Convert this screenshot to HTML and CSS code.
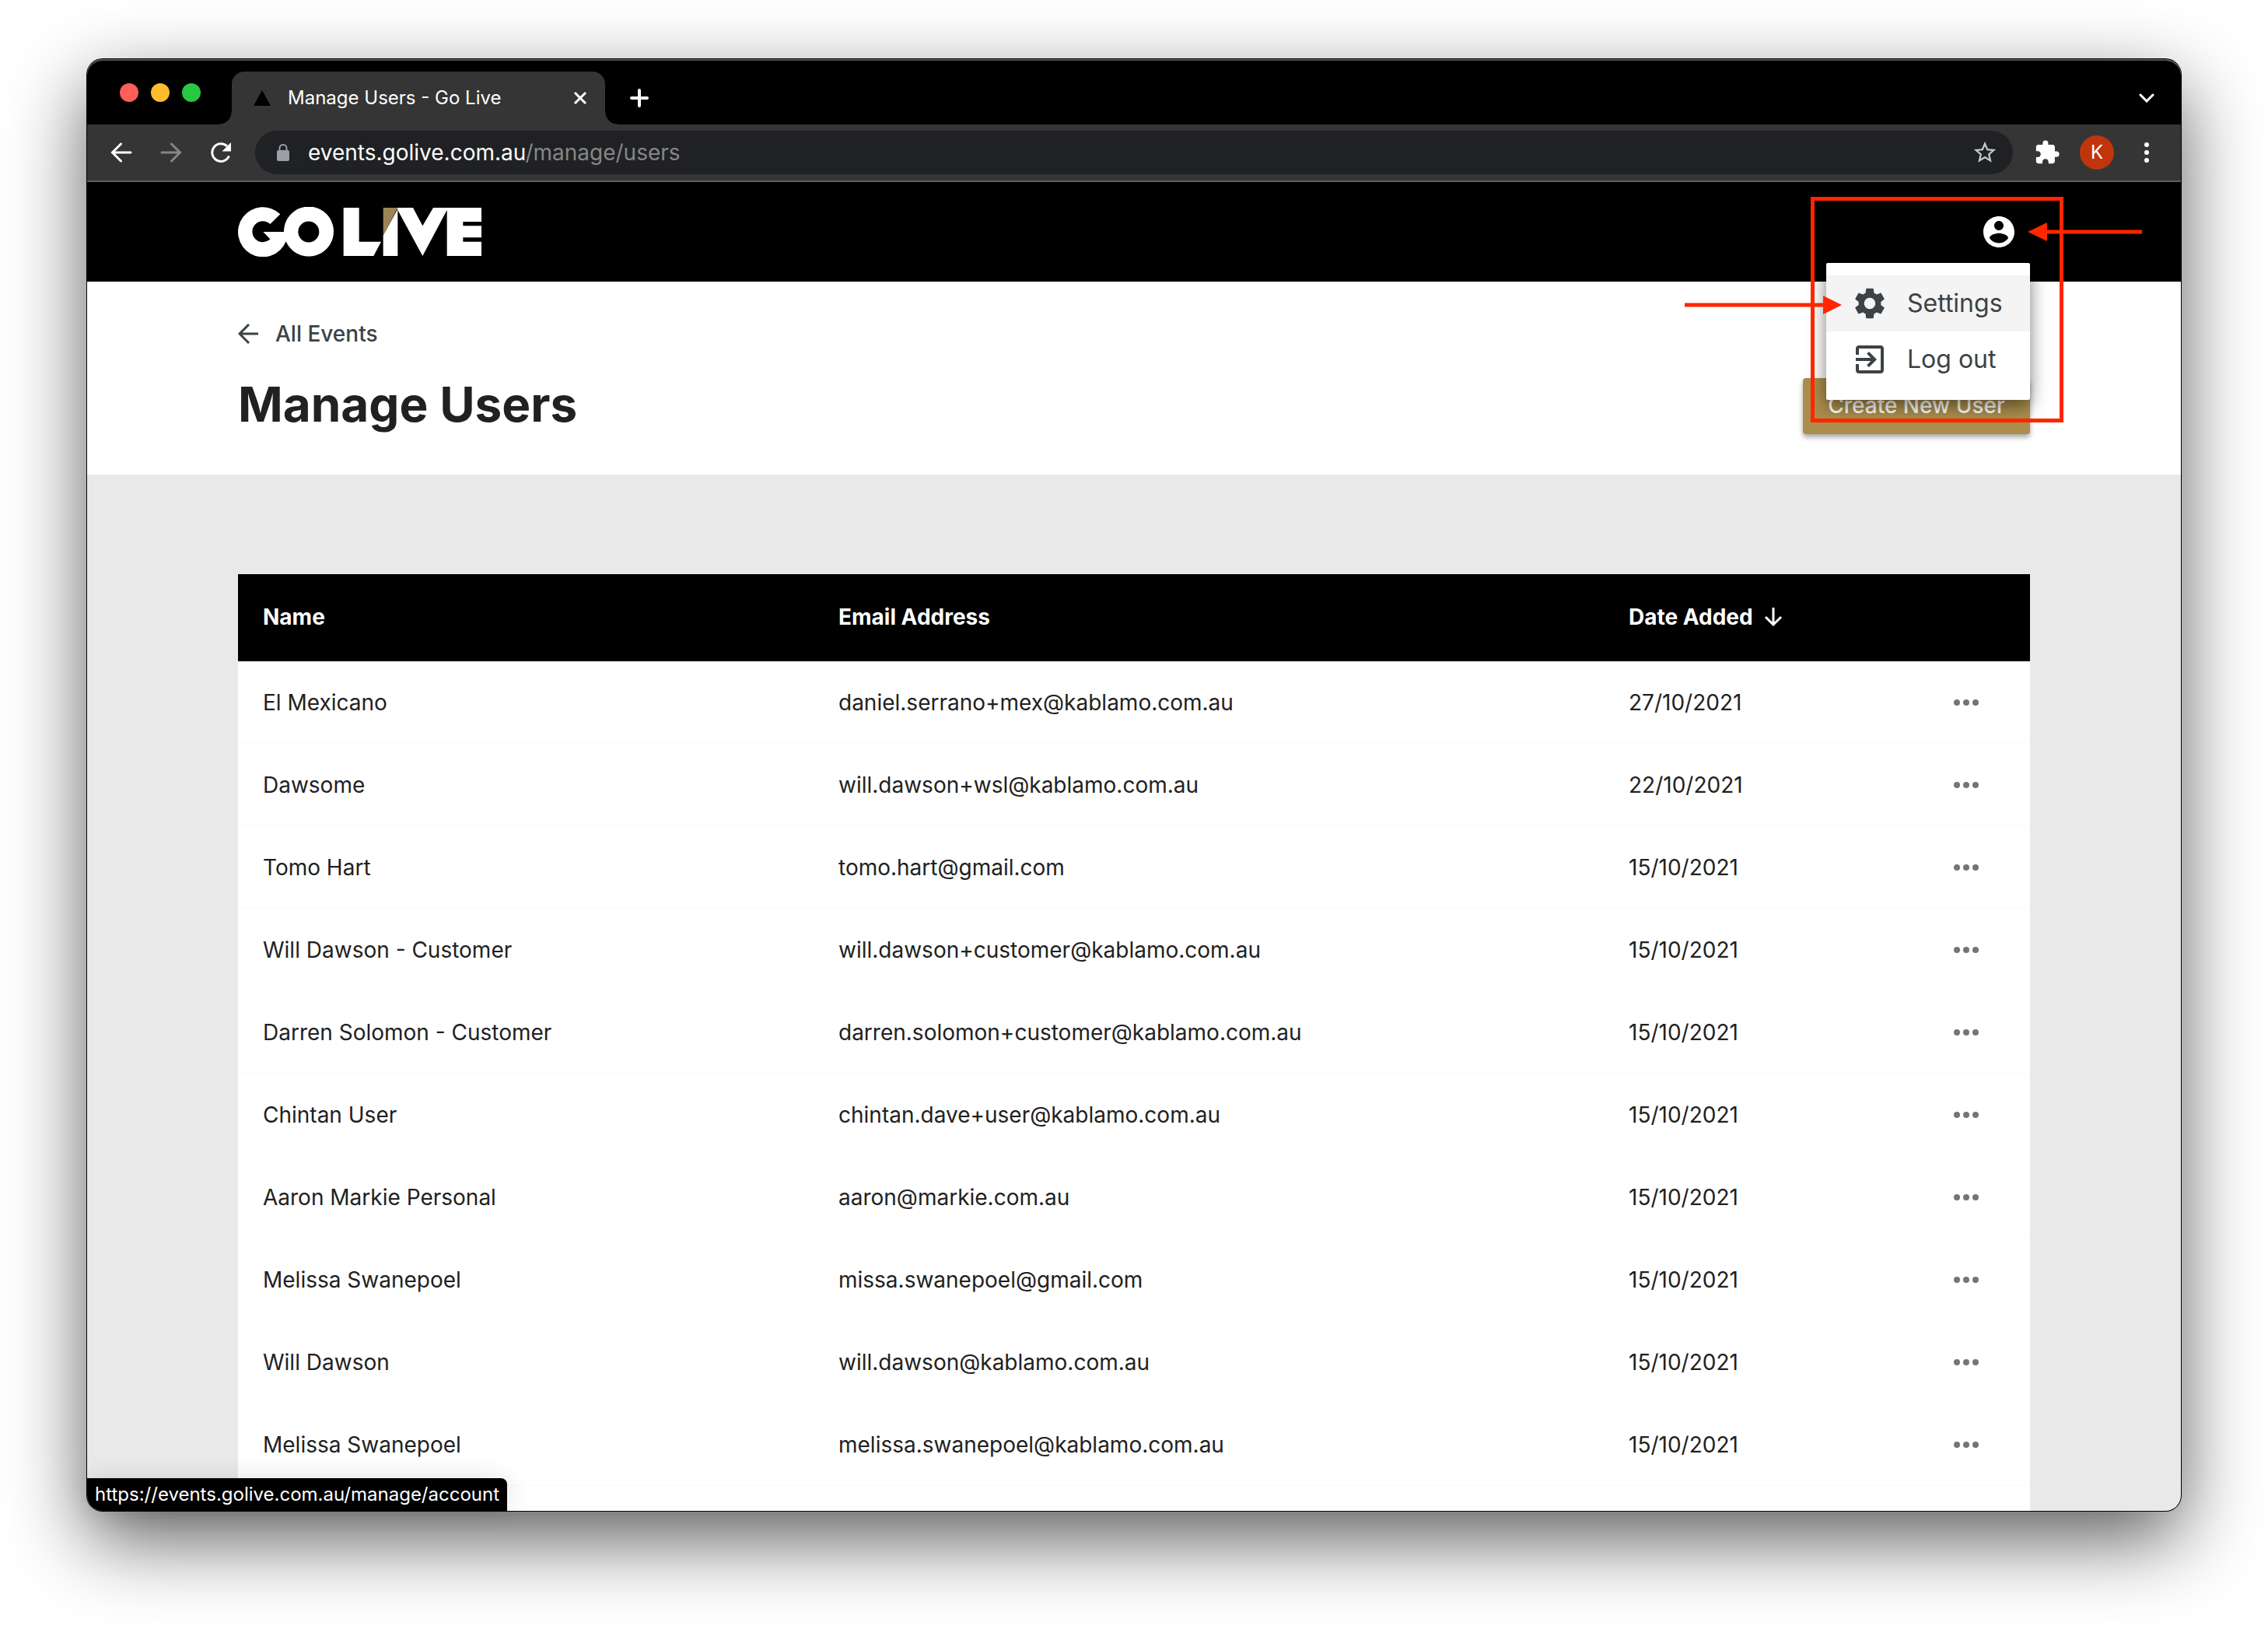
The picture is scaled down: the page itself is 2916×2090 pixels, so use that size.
FILE: index.html
```html
<!DOCTYPE html>
<html lang="en">
<head>
<meta charset="utf-8">
<title>Manage Users - Go Live</title>
<link rel="stylesheet" href="styles.css">
</head>
<body>
<svg class="sprite" aria-hidden="true">
  <symbol id="more" viewBox="0 0 48 48"><circle cx="12" cy="24" r="4"/><circle cx="24" cy="24" r="4"/><circle cx="36" cy="24" r="4"/></symbol>
</svg>
<div class="window">
  <div class="tabstrip">
    <div class="lights"><span class="light red"></span><span class="light amber"></span><span class="light green"></span></div>
    <div class="tab">
      <svg class="favicon" viewBox="0 0 22 20"><path d="M11 0 22 20H0z"/></svg>
      <span class="tab-title">Manage Users - Go Live</span>
      <button class="icon-btn" aria-label="Close tab"><svg width="18" height="18" viewBox="0 0 18 18" fill="none" stroke="#fff" stroke-width="3"><path d="M2 2 16 16M16 2 2 16"/></svg></button>
    </div>
    <button class="icon-btn new-tab" aria-label="New tab"><svg width="24" height="24" viewBox="0 0 24 24" fill="none" stroke="#fff" stroke-width="4" stroke-linecap="round"><path d="M12 2v20M2 12h20"/></svg></button>
    <button class="icon-btn tab-search" aria-label="Search tabs"><svg width="20" height="12" viewBox="0 0 20 12" fill="none" stroke="#fff" stroke-width="3" stroke-linecap="round"><path d="M2 2l8 8 8-8"/></svg></button>
  </div>
  <div class="toolbar">
    <button class="icon-btn" aria-label="Back"><svg width="28" height="28" viewBox="0 0 28 28" fill="none" stroke="#fff" stroke-width="3" stroke-linecap="round"><path d="M26 14H3M13.500 3 2.500 14l11 11"/></svg></button>
    <button class="icon-btn" aria-label="Forward"><svg width="28" height="28" viewBox="0 0 28 28" fill="none" stroke="#868686" stroke-width="3" stroke-linecap="round"><path d="M2 14h23M14.500 3l11 11-11 11"/></svg></button>
    <button class="icon-btn" aria-label="Reload"><svg width="28" height="28" viewBox="0 0 28 28"><path d="M24.500 18.500A11.300 11.300 0 1 1 22 6" fill="none" stroke="#fff" stroke-width="3"/><path d="M27 1v11.500H15.500z" fill="#fff"/></svg></button>
    <div class="omnibox">
      <svg width="16" height="22" viewBox="0 0 16 22"><path d="M3.500 9V5.500a4.500 4.500 0 0 1 9 0V9" fill="none" stroke="#9aa0a6" stroke-width="2"/><rect y="8" width="16" height="14" rx="2" fill="#9aa0a6"/></svg>
      <a class="url" href="#">events.golive.com.au<span>/manage/users</span></a>
      <button class="icon-btn" aria-label="Bookmark"><svg width="34" height="34" viewBox="0 0 24 24" fill="#c4c7ca"><path d="M22 9.240l-7.190-.62L12 2 9.190 8.630 2 9.240l5.460 4.730L5.820 21 12 17.270 18.180 21l-1.630-7.030L22 9.240zM12 15.400l-3.760 2.270 1-4.280-3.320-2.880 4.380-.38L12 6.100l1.710 4.040 4.380.38-3.320 2.880 1 4.280L12 15.400z"/></svg></button>
    </div>
    <button class="icon-btn" aria-label="Extensions"><svg width="34" height="34" viewBox="0 0 24 24" fill="#fff"><path d="M20.500 11H19V7c0-1.100-.9-2-2-2h-4V3.500a2.500 2.500 0 0 0-5 0V5H4c-1.100 0-1.990.9-1.990 2v3.800H3.500c1.490 0 2.700 1.210 2.700 2.700s-1.210 2.700-2.700 2.700H2V20c0 1.100.9 2 2 2h3.800v-1.500c0-1.490 1.210-2.700 2.700-2.700s2.700 1.210 2.700 2.700V22H17c1.100 0 2-.9 2-2v-4h1.500a2.500 2.500 0 0 0 0-5z"/></svg></button>
    <button class="avatar" aria-label="Profile K">K</button>
    <button class="icon-btn" aria-label="Browser menu"><svg width="28" height="28" viewBox="0 0 28 28" fill="#fff"><circle cx="14" cy="4" r="3"/><circle cx="14" cy="14" r="3"/><circle cx="14" cy="24" r="3"/></svg></button>
  </div>

  <header class="site-header">
    <a class="logo" href="#" aria-label="Go Live">
      <svg width="314" height="64" viewBox="48 48 942 192" fill="#fff">
        <path fill-rule="evenodd" d="M211 76A96 96 0 1 0 233 181A96 96 0 1 0 225 144H145L172 172A40.500 40.500 0 1 1 172 114ZM361 144A40.500 40.500 0 1 1 280 144A40.500 40.500 0 1 1 361 144Z"/>
        <path d="M455 51H515V182H600L571 237H455Z"/>
        <path fill="#9c8554" d="M608 51H664L608 158Z"/>
        <path d="M608 158L664 56V237H608Z"/>
        <path d="M662 51H723L760 121L801 51H987V105H916V121H987V166H916V182H987V237H854V60L760 237L664 60Z"/>
      </svg>
    </a>
    <button class="icon-btn account" aria-label="Account" aria-expanded="true"><svg width="48" height="48" viewBox="0 0 24 24" fill="#fff"><path d="M12 2C6.480 2 2 6.480 2 12s4.480 10 10 10 10-4.480 10-10S17.520 2 12 2zm0 3c1.660 0 3 1.340 3 3s-1.340 3-3 3-3-1.340-3-3 1.340-3 3-3zm0 14.200c-2.500 0-4.710-1.280-6-3.220.03-1.990 4-3.080 6-3.080 1.990 0 5.970 1.090 6 3.080-1.290 1.940-3.500 3.220-6 3.220z"/></svg></button>
    <nav class="menu" aria-label="Account menu">
      <a class="menu-item active" href="#"><svg width="48" height="48" viewBox="0 0 24 24"><path d="M19.140 12.940c.04-.3.06-.61.06-.94 0-.32-.02-.64-.07-.94l2.030-1.580c.18-.14.23-.41.12-.61l-1.920-3.320c-.12-.22-.37-.29-.59-.22l-2.390.96c-.5-.38-1.030-.7-1.620-.94l-.36-2.540c-.04-.24-.24-.41-.48-.41h-3.840c-.24 0-.43.17-.47.41l-.36 2.540c-.59.24-1.130.57-1.620.94l-2.390-.96c-.22-.08-.47 0-.59.22L2.740 8.870c-.12.210-.08.470.12.610l2.030 1.580c-.05.3-.09.63-.09.94s.02.640.07.940l-2.030 1.580c-.18.140-.23.410-.12.610l1.920 3.320c.12.220.37.290.59.220l2.390-.96c.5.380 1.030.7 1.620.94l.36 2.540c.05.240.24.410.48.410h3.840c.24 0 .44-.17.470-.41l.36-2.540c.59-.24 1.130-.56 1.620-.94l2.390.96c.22.080.47 0 .59-.22l1.920-3.320c.12-.22.070-.47-.12-.61l-2.010-1.580zM12 15.600c-1.980 0-3.600-1.620-3.600-3.600s1.620-3.600 3.600-3.600 3.600 1.620 3.600 3.600-1.620 3.600-3.600 3.600z"/></svg>Settings</a>
      <a class="menu-item" href="#"><svg width="48" height="48" viewBox="0 0 24 24"><path d="M10.090 15.590L11.500 17l5-5-5-5-1.410 1.410L12.670 11H3v2h9.670l-2.580 2.590zM19 3H5c-1.110 0-2 .9-2 2v4h2V5h14v14H5v-4H3v4c0 1.100.89 2 2 2h14c1.100 0 2-.9 2-2V5c0-1.100-.9-2-2-2z"/></svg>Log out</a>
    </nav>
  </header>

  <section class="page-head">
    <a class="back-link" href="#"><svg width="26" height="26" viewBox="0 0 26 26" fill="none" stroke="#3c4245" stroke-width="3"><path d="M26 13H2M14 1 2 13l12 12"/></svg>All Events</a>
    <div class="title-row">
      <h1>Manage Users</h1>
      <button class="create">Create New User</button>
    </div>
  </section>

  <main>
    <table>
      <colgroup><col class="c-name"><col><col class="c-date"><col class="c-more"></colgroup>
      <thead><tr><th>Name</th><th>Email Address</th><th><span class="sort">Date Added <svg width="24" height="26" viewBox="0 0 24 26" fill="none" stroke="#fff" stroke-width="3"><path d="M12 1v22M2 13l10 10 10-10"/></svg></span></th><th></th></tr></thead>
      <tbody>
        <tr><td>El Mexicano</td><td>daniel.serrano+mex@kablamo.com.au</td><td>27/10/2021</td><td><button class="icon-btn more" aria-label="Actions"><svg><use href="#more"/></svg></button></td></tr>
        <tr><td>Dawsome</td><td>will.dawson+wsl@kablamo.com.au</td><td>22/10/2021</td><td><button class="icon-btn more" aria-label="Actions"><svg><use href="#more"/></svg></button></td></tr>
        <tr><td>Tomo Hart</td><td>tomo.hart@gmail.com</td><td>15/10/2021</td><td><button class="icon-btn more" aria-label="Actions"><svg><use href="#more"/></svg></button></td></tr>
        <tr><td>Will Dawson - Customer</td><td>will.dawson+customer@kablamo.com.au</td><td>15/10/2021</td><td><button class="icon-btn more" aria-label="Actions"><svg><use href="#more"/></svg></button></td></tr>
        <tr><td>Darren Solomon - Customer</td><td>darren.solomon+customer@kablamo.com.au</td><td>15/10/2021</td><td><button class="icon-btn more" aria-label="Actions"><svg><use href="#more"/></svg></button></td></tr>
        <tr><td>Chintan User</td><td>chintan.dave+user@kablamo.com.au</td><td>15/10/2021</td><td><button class="icon-btn more" aria-label="Actions"><svg><use href="#more"/></svg></button></td></tr>
        <tr><td>Aaron Markie Personal</td><td>aaron@markie.com.au</td><td>15/10/2021</td><td><button class="icon-btn more" aria-label="Actions"><svg><use href="#more"/></svg></button></td></tr>
        <tr><td>Melissa Swanepoel</td><td>missa.swanepoel@gmail.com</td><td>15/10/2021</td><td><button class="icon-btn more" aria-label="Actions"><svg><use href="#more"/></svg></button></td></tr>
        <tr><td>Will Dawson</td><td>will.dawson@kablamo.com.au</td><td>15/10/2021</td><td><button class="icon-btn more" aria-label="Actions"><svg><use href="#more"/></svg></button></td></tr>
        <tr><td>Melissa Swanepoel</td><td>melissa.swanepoel@kablamo.com.au</td><td>15/10/2021</td><td><button class="icon-btn more" aria-label="Actions"><svg><use href="#more"/></svg></button></td></tr>
      </tbody>
    </table>
  </main>

  <div class="status">https://events.golive.com.au/manage/account</div>

  <svg class="callout" width="588" height="290" viewBox="0 0 588 290" fill="#ff2600" aria-hidden="true">
    <rect x="164.500" y="2.500" width="320" height="285" fill="none" stroke="#ff2600" stroke-width="5"/>
    <path d="M0 136.500h178V127l24 12-24 12v-9.500H0z"/>
    <path d="M588 42.500H466V33l-25 12 25 12v-9.500h122z"/>
  </svg>
</div>
</body>
</html>
```
FILE: styles.css
```css
* { box-sizing: border-box; }

body {
  margin: 0;
  padding: 76px 112px 148px;
  background: #fff;
  color: #212121;
  font-family: Inter, "Liberation Sans", sans-serif;
  font-size: 28px;
  line-height: 36px;
}

a { color: inherit; text-decoration: none; }
button { font: inherit; border: 0; cursor: pointer; }
svg { display: block; flex: none; }
.sprite { position: absolute; width: 0; height: 0; }

.icon-btn {
  display: flex;
  align-items: center;
  justify-content: center;
  flex: none;
  padding: 0;
  background: none;
}

.window {
  position: relative;
  border-radius: 20px;
  background: #e9e9e9;
  box-shadow: 0 0 0 1px #000, 0 36px 100px rgba(0, 0, 0, .64);
}

/* Browser chrome */
.tabstrip {
  display: flex;
  align-items: center;
  height: 84px;
  padding: 16px 34px 0 42px;
  border-radius: 20px 20px 0 0;
  background: #000;
  box-shadow: inset 0 2px #555;
}
.lights { display: flex; gap: 16px; width: 144px; margin-top: -14px; }
.light { width: 24px; height: 24px; border-radius: 50%; }
.red { background: #ff5f57; }
.amber { background: #febc2e; }
.green { background: #28c840; }

.tab {
  position: relative;
  display: flex;
  align-items: center;
  width: 480px;
  height: 68px;
  padding: 0 23px 0 28px;
  border-radius: 16px 16px 0 0;
  background: #353535;
  color: #fff;
  font-size: 24px;
}
.tab::before, .tab::after {
  content: "";
  position: absolute;
  bottom: 0;
  width: 16px;
  height: 16px;
}
.tab::before { left: -16px; background: radial-gradient(circle at 0 0, transparent 15px, #353535 16px); }
.tab::after { right: -16px; background: radial-gradient(circle at 100% 0, transparent 15px, #353535 16px); }
.favicon { width: 22px; height: 20px; margin-right: 22px; }
.tab-title { flex: 1; white-space: nowrap; }
.new-tab { margin-left: 32px; }
.tab-search { margin-left: auto; }

.toolbar {
  display: flex;
  align-items: center;
  gap: 36px;
  height: 74px;
  padding: 0 30px;
  border-bottom: 2px solid #606060;
  background: #353535;
}
.omnibox {
  display: flex;
  flex: 1;
  align-items: center;
  height: 56px;
  margin: 0 -9px 0 -6px;
  padding: 0 19px 0 28px;
  border-radius: 28px;
  background: #202124;
}
.url { flex: 1; margin-left: 24px; color: #fff; }
.url span { color: #868686; }
.avatar {
  width: 44px;
  height: 44px;
  margin: 0 -8px 0 -11px;
  padding: 0;
  border-radius: 50%;
  background: #c1350d;
  color: #fff;
  font-size: 24px;
}

/* Site */
.site-header {
  position: relative;
  display: flex;
  align-items: center;
  justify-content: space-between;
  height: 128px;
  padding: 0 194px;
  background: #000;
}
.account { margin-right: 16px; }
.menu {
  position: absolute;
  z-index: 1;
  top: 104px;
  right: 194px;
  width: 262px;
  padding: 16px 0;
  border-radius: 2px;
  background: #fff;
  box-shadow: 0 8px 20px rgba(0, 0, 0, .4), 0 2px 32px rgba(0, 0, 0, .14);
}
.menu-item {
  display: flex;
  align-items: center;
  gap: 24px;
  height: 72px;
  padding: 0 32px;
  color: #3c4245;
  fill: #3c4245;
  font-size: 32px;
  white-space: nowrap;
}
.active { background: #f4f4f4; }

.page-head {
  padding: 49px 194px 52px;
  background: #fff;
}
.back-link {
  display: flex;
  align-items: center;
  gap: 22px;
  color: #3c4245;
  font-weight: 500;
}
.title-row {
  display: flex;
  align-items: flex-end;
  justify-content: space-between;
  height: 111px;
}
h1 {
  margin: 0;
  font-size: 62px;
  font-weight: 700;
  line-height: 76px;
}
.create {
  height: 72px;
  width: 292px;
  padding: 0 0 3px;
  border-radius: 4px;
  background: #ab8e4d;
  color: #fff;
  font-weight: 500;
  box-shadow: 0 4px 6px rgba(0, 0, 0, .35);
}

main { padding: 128px 194px 0; }
table {
  width: 100%;
  table-layout: fixed;
  border-spacing: 0;
  background: #fff;
}
main::after {
  content: "";
  display: block;
  height: 32px;
  background: #fff;
}
.c-name { width: 740px; }
.c-date { width: 384px; }
.c-more { width: 164px; }
th, td { padding: 0 32px; text-align: left; }
th {
  height: 112px;
  padding-bottom: 3px;
  background: #000;
  color: #fff;
  font-weight: 700;
}
td {
  height: 106px;
  padding-top: 2px;
  border-bottom: 2px solid #fcfcfc;
}
.sort { display: flex; align-items: center; gap: 14px; }
.more { margin: 0 auto; fill: #757575; }
.more svg { width: 48px; height: 48px; }

.status {
  position: absolute;
  left: 0;
  bottom: 0;
  height: 42px;
  padding: 0 10px;
  border-radius: 0 8px 0 20px;
  background: #000;
  color: #fff;
  font-size: 24px;
  line-height: 42px;
  box-shadow: 0 0 32px rgba(0, 0, 0, .12);
}

/* Red box and arrows over the account menu */
.callout {
  position: absolute;
  z-index: 2;
  top: 177px;
  right: 50px;
}
```
